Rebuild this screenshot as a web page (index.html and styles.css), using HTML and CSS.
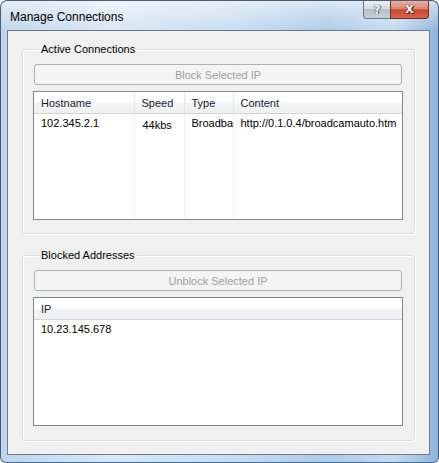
FILE: index.html
```html
<!DOCTYPE html>
<html lang="en">
<head>
    <meta charset="UTF-8">
    <title>Manage Connections</title>
    <link rel="stylesheet" href="styles.css">
</head>
<body>
    <div class="window">
        <div class="titlebar">
            <span class="title">Manage Connections</span>
            <div class="caption-buttons">
                <span class="cap help">?</span>
                <span class="cap close">X</span>
            </div>
        </div>

        <div class="client">
            <fieldset class="group first">
                <legend>Active Connections</legend>
                <button class="action" disabled>Block Selected IP</button>
                <div class="list">
                    <table>
                        <colgroup>
                            <col class="c-host"><col class="c-speed"><col class="c-type"><col>
                        </colgroup>
                        <tr class="head">
                            <th>Hostname</th><th>Speed</th><th>Type</th><th>Content</th>
                        </tr>
                        <tr class="row">
                            <td>102.345.2.1</td><td class="speed">44kbs</td><td><span class="cell">Broadband</span></td><td>http://0.1.0.4/broadcamauto.htm</td>
                        </tr>
                        <tr class="filler">
                            <td></td><td></td><td></td><td></td>
                        </tr>
                    </table>
                </div>
            </fieldset>

            <fieldset class="group second">
                <legend>Blocked Addresses</legend>
                <button class="action" disabled>Unblock Selected IP</button>
                <div class="list">
                    <table>
                        <tr class="head">
                            <th>IP</th>
                        </tr>
                        <tr class="row">
                            <td>10.23.145.678</td>
                        </tr>
                        <tr class="filler">
                            <td></td>
                        </tr>
                    </table>
                </div>
            </fieldset>
        </div>
    </div>
</body>
</html>
```

FILE: styles.css
```css
body { margin: 0; background: #fff; font-family: "Liberation Sans", Arial, sans-serif; font-size: 11px; color: #000; }

.window {
    width: 439px;
    height: 463px;
    box-sizing: border-box;
    border: 1px solid #4d5d6f;
    border-bottom-color: #3f6f98;
    border-radius: 7px 7px 6px 6px;
    background:
        linear-gradient(to bottom, rgba(255,255,255,0.55), rgba(255,255,255,0) 30px),
        linear-gradient(to right, #bed5ec 0%, #d9e7f5 25%, #c6dbf0 55%, #aecae8 75%, #c5dbf0 90%, #8fb5dc 100%);
    display: flex;
    flex-direction: column;
    overflow: hidden;
}

.titlebar {
    height: 29px;
    display: flex;
    align-items: flex-start;
    flex-shrink: 0;
}
.title {
    font-size: 12px;
    padding: 9px 0 0 9px;
    color: #000;
}
.caption-buttons { margin-left: auto; margin-right: 9px; display: flex; }
.cap {
    height: 18px;
    box-sizing: border-box;
    display: flex;
    align-items: center;
    justify-content: center;
    color: #fff;
    font-family: "DejaVu Sans", sans-serif;
    font-weight: bold;
    font-size: 12px;
    border: 1px solid #6a7888;
    border-top: none;
}
.help {
    width: 27px;
    border-radius: 0 0 0 4px;
    border-right: none;
    font-size: 13px;
    background: linear-gradient(to bottom, #eef1f5 0%, #d6dbe2 45%, #b6bec8 50%, #c8d0d9 100%);
    text-shadow: 0 0 1px #3b4654, 0 0 1px #3b4654, 1px 0 0 #56626f;
}
.close {
    width: 39px;
    border-color: #6d3125;
    border-radius: 0 0 4px 0;
    background: linear-gradient(to bottom, #ebb0a2 0%, #da8773 45%, #c64a2e 52%, #d8664a 100%);
    font-size: 11px;
    text-shadow: 0 0 1px #4e150b, 0 0 1px #4e150b, 1px 1px 0 #6b2315;
}

.client {
    margin: 0 8px 7px 6px;
    flex: 1;
    border: 1px solid #6d7b8b;
    background: #f0f0f0;
    padding: 0 14px;
    display: flex;
    flex-direction: column;
}

.group {
    margin: 12px 0 0 0;
    padding: 8px 11px 13px 10px;
    border: 1px solid #d5dfe5;
    border-radius: 3px;
    box-shadow: inset 1px 1px 0 #fff, 1px 1px 0 #fff;
    min-width: 0;
    display: flex;
    flex-direction: column;
}
.group.second { margin-top: 15px; padding-bottom: 14px; }
.group legend {
    margin-left: 6px;
    padding: 0 2px;
    line-height: 13px;
    background: #f0f0f0;
}

.action {
    height: 21px;
    margin: 0 1px 6px 1px;
    font-family: inherit;
    font-size: 11px;
    color: #a0a0a0;
    background: #f4f4f4;
    border: 1px solid #adb2b5;
    border-radius: 3px;
}

.list {
    height: 129px;
    box-sizing: border-box;
    border: 1px solid #828790;
    background: #fff;
    overflow: hidden;
}
.list table {
    width: 100%;
    table-layout: fixed;
    border-collapse: collapse;
}
.c-host { width: 100px; }
.c-speed { width: 50px; }
.c-type { width: 49px; }

.list th, .list td {
    padding: 0 0 0 7px;
    text-align: left;
    white-space: nowrap;
    overflow: hidden;
    border-right: 1px solid #f0f0f0;
}
.list th {
    height: 21px;
    font-weight: normal;
    color: #1b1b2b;
    border-right-color: #e3e5e8;
    border-bottom: 1px solid #d5d5d5;
    background: linear-gradient(to bottom, #ffffff 0%, #ffffff 45%, #f3f4f6 55%, #eff0f2 100%);
}
.list tr > :last-child { border-right: none; }
.list .row td { height: 17px; padding-top: 3px; vertical-align: top; }
.list .row td.speed { padding-top: 5px; padding-left: 8px; }
.list .cell { display: block; width: 41px; overflow: hidden; }
.list .filler td { height: 85px; }
```
